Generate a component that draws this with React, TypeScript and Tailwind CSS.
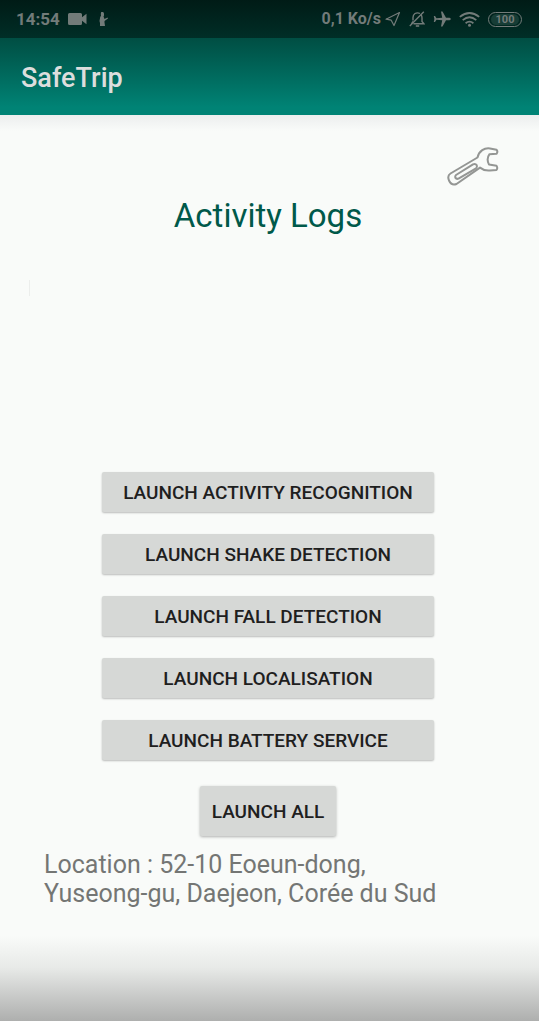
import React from "react";

const services: string[] = [
  "Launch activity recognition",
  "Launch shake detection",
  "Launch fall detection",
  "Launch localisation",
  "Launch battery service",
];

function StatusBar() {
  return (
    <div className="flex h-[38px] items-center justify-between bg-linear-to-b from-[#001b16] to-[#002e27] pr-[17px] pl-4 text-[#727b79]">
      <div className="flex items-center">
        <span className="w-[52px] text-[17px] leading-5 font-bold whitespace-nowrap">14:54</span>
        <svg className="h-3 w-[19px]" viewBox="0 0 19 12" fill="currentColor" aria-hidden="true">
          <path d="M1.500 0H12.500Q14 0 14 1.500V4.200L18.500 .8V11.200L14 7.800V10.500Q14 12 12.500 12H1.500Q0 12 0 10.500V1.500Q0 0 1.500 0Z" />
        </svg>
        <svg className="ml-3 h-[14px] w-[9px]" viewBox="0 0 9 14" fill="currentColor" aria-hidden="true">
          <path d="M2.200 0H4.200L5 1.500V3.500L4.500 4.500L5.500 7L8.500 5.500L9 6.500L5.500 9V10.500L6 14H1V11L.5 9L1.200 5L2 3.800L1.800 2Z" />
        </svg>
      </div>
      <div className="flex items-center">
        <span className="text-[16px] leading-5 font-bold whitespace-nowrap">0,1 Ko/s</span>
        <svg className="ml-1 h-4 w-4" viewBox="0 0 16 16" fill="none" stroke="currentColor" strokeWidth="1.200" strokeLinejoin="round" aria-hidden="true">
          <path d="M14.500 1.500L1 8.200L6.200 9.200L9 14.500Z" />
        </svg>
        <svg className="ml-2 h-4 w-4" viewBox="0 0 16 16" fill="none" stroke="currentColor" strokeWidth="1.400" aria-hidden="true">
          <path d="M11 2.500Q8.500 1.200 6 2.500Q4 3.800 4 6.500V9.500M12.300 4.200Q13 5.200 13 7V10.500L15 12.800H4.500M.8 15L14.800 .8M2.500 12.800L4 10.500" />
          <path d="M6.800 15H10.200" strokeWidth="1.600" />
        </svg>
        <svg className="ml-2 h-4 w-[18px]" viewBox="0 0 18 16" fill="currentColor" aria-hidden="true">
          <path d="M16.500 6.800H13L9.500 .5H8L9.200 6.800L3.500 7.200L2 5H.8L1.400 8L.8 11H2L3.500 8.800L9.200 9.200L8 15.500H9.500L13 9.200H16.500Q17.800 9 17.800 8T16.500 6.800Z" />
        </svg>
        <svg className="ml-2 h-[15px] w-[21px]" viewBox="0 0 21 15" fill="none" stroke="currentColor" strokeWidth="1.800" aria-hidden="true">
          <path d="M.8 4.900Q10.500 -3 20.200 4.900M3.700 8.100Q10.500 2.500 17.300 8.100M6.600 11.200Q10.500 8 14.400 11.200" />
          <circle cx="10.500" cy="13.300" r="1.500" fill="currentColor" stroke="none" />
        </svg>
        <span className="ml-2 flex h-[15px] w-[34px] items-center justify-center rounded-full border border-current">
          <span className="flex h-[11px] w-7 items-center justify-center rounded-full bg-[#173d36] pt-px text-[11px] leading-3 font-bold">100</span>
        </span>
      </div>
    </div>
  );
}

function WrenchIcon() {
  return (
    <svg className="h-10 w-[52px]" viewBox="0 0 52 40" fill="none" stroke="#949694" strokeWidth="2" strokeLinejoin="round" strokeLinecap="round" aria-hidden="true">
      <path d="M30.500 11.500C32 4.800 37.500 1.600 43 2.400L49.500 3.800Q51.200 5.500 49.500 7.800L42.500 8.200Q39 13 42 18.500L49.500 19.700Q51 22 49.500 24L43 24.500C38.500 25 35 23.200 33 21.600L9.500 38Q4.500 40 2 34.500Q0 29.500 3.500 27.500Z" />
      <path d="M9 29L26 18.300Q28.500 17.200 29.800 19.300Q30.500 21.200 29 22.300L11.500 32.600Q9.500 33.500 8.300 31.600Q7.800 30 9 29Z" />
    </svg>
  );
}

export default function App() {
  return (
    <div className="flex min-h-screen flex-col bg-[#f9fbf9] font-[Roboto,sans-serif]">
      <header>
        <StatusBar />
        <div className="flex h-[77px] items-center bg-linear-to-b from-[#004e43] to-[#008375] to-90% px-[21px] pt-[3px]">
          <h1 className="text-[27px] leading-8 font-medium text-[#dcdedd]">SafeTrip</h1>
        </div>
      </header>
      <main className="flex grow flex-col bg-linear-to-b from-[#eceeee] to-transparent to-[16px]">
        <div className="flex justify-end pt-[31px] pr-10">
          <button type="button" aria-label="Settings">
            <WrenchIcon />
          </button>
        </div>
        <h2 className="mt-[10px] pr-[3px] text-center text-[33px] leading-10 text-[#00594a]">Activity Logs</h2>
        <div className="h-[236px] px-[29px] pt-11">
          <div className="h-4 w-px bg-[#eceeec]" />
        </div>
        <div className="flex flex-col items-center pr-[3px]">
          <div className="flex w-[62%] flex-col gap-[22px]">
            {services.map((label) => (
              <button
                key={label}
                type="button"
                className="h-10 rounded-xs bg-[#d6d8d6] pt-0.5 text-[19px] leading-6 font-medium whitespace-nowrap text-[#1e201e] uppercase shadow-[0_1px_2px_rgba(0,0,0,0.25)]"
              >
                {label}
              </button>
            ))}
          </div>
          <button
            type="button"
            className="mt-[26px] h-[50px] rounded-xs bg-[#d6d8d6] px-3 pt-0.5 text-[19px] leading-6 font-medium text-[#1e201e] uppercase shadow-[0_1px_3px_rgba(0,0,0,0.3)]"
          >
            Launch all
          </button>
        </div>
        <p className="mt-[14px] max-w-[500px] px-11 text-[25px] leading-[29px] text-[#747674]">
          Location : 52-10 Eoeun-dong, Yuseong-gu, Daejeon, Corée du Sud
        </p>
        <div className="mt-1.5 min-h-[90px] grow bg-linear-to-b from-transparent from-20% via-[#e8eae8] via-50% to-[#aeafae]" />
      </main>
    </div>
  );
}
